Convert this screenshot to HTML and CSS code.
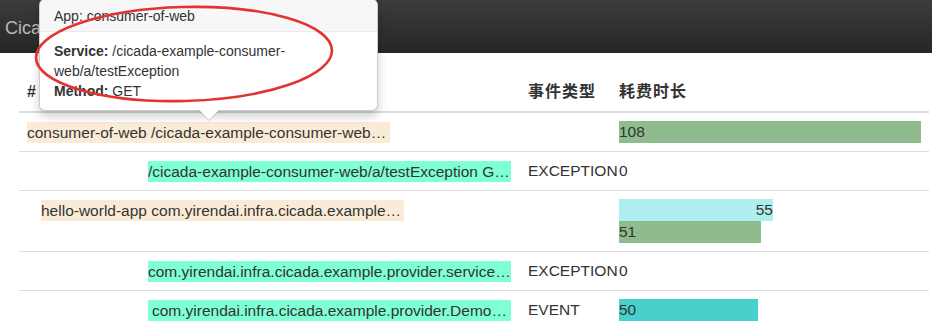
FILE: index.html
```html
<!DOCTYPE html>
<html lang="zh">
<head>
<meta charset="utf-8">
<title>Cicada</title>
<link rel="stylesheet" href="styles.css">
</head>
<body>
<nav class="navbar">
  <span class="brand">Cicada</span>
</nav>

<main class="content">
  <table class="trace-table">
    <colgroup>
      <col class="col-name">
      <col class="col-type">
      <col class="col-time">
    </colgroup>
    <thead>
      <tr>
        <th>#</th>
        <th>事件类型</th>
        <th>耗费时长</th>
      </tr>
    </thead>
    <tbody>
      <tr>
        <td><span class="name app lvl-0">consumer-of-web /cicada-example-consumer-web…</span></td>
        <td></td>
        <td><div class="bar seagreen" style="width:302px">108</div></td>
      </tr>
      <tr>
        <td><span class="name svc lvl-2">/cicada-example-consumer-web/a/testException G…</span></td>
        <td>EXCEPTION</td>
        <td><div class="bar zero" style="width:0">0</div></td>
      </tr>
      <tr>
        <td><span class="name app lvl-1">hello-world-app com.yirendai.infra.cicada.example…</span></td>
        <td></td>
        <td>
          <div class="bar turquoise right" style="width:154px">55</div>
          <div class="bar seagreen" style="width:142px">51</div>
        </td>
      </tr>
      <tr>
        <td><span class="name svc lvl-2">com.yirendai.infra.cicada.example.provider.service…</span></td>
        <td>EXCEPTION</td>
        <td><div class="bar zero" style="width:0">0</div></td>
      </tr>
      <tr>
        <td><span class="name svc lvl-2 pad">com.yirendai.infra.cicada.example.provider.Demo…</span></td>
        <td>EVENT</td>
        <td><div class="bar medturquoise" style="width:139px">50</div></td>
      </tr>
    </tbody>
  </table>
</main>

<div class="popover">
  <div class="popover-title">App: consumer-of-web</div>
  <div class="popover-body">
    <div><b>Service:</b> /cicada-example-consumer-web/a/testException</div>
    <div><b>Method:</b> GET</div>
  </div>
</div>

<svg class="annotation" width="932" height="329" viewBox="0 0 932 329">
  <ellipse cx="184" cy="54" rx="148" ry="47" fill="none" stroke="#e2332f" stroke-width="2.6" transform="rotate(-1.5 184 54)"/>
</svg>
</body>
</html>
```

FILE: styles.css
```css
html, body {
  margin: 0;
  padding: 0;
  background: #fff;
}

body {
  font-family: "Liberation Sans", Arial, "Noto Sans CJK SC", sans-serif;
  font-size: 14px;
  line-height: 20px;
  color: #333;
  width: 932px;
  height: 329px;
  overflow: hidden;
  position: relative;
}

.navbar {
  height: 53px;
  background: linear-gradient(#3c3c3c, #262626);
  display: flex;
  align-items: center;
  padding-left: 5px;
}

.brand {
  font-size: 18px;
  color: #b8b8b8;
  line-height: 20px;
  margin-top: 2px;
}

.content {
  padding: 20px 3px 0 19px;
}

.trace-table {
  border-collapse: collapse;
  table-layout: fixed;
  width: 910px;
  font-size: 15.5px;
}

.col-name { width: 501px; }
.col-type { width: 91px; }
.col-time { width: 318px; }

.trace-table th {
  text-align: left;
  font-family: "Liberation Sans", Arial, "Noto Sans CJK SC", sans-serif;
  font-weight: bold;
  font-size: 16px;
  letter-spacing: 1px;
  line-height: 22px;
  padding: 8px;
  border-bottom: 2px solid #ddd;
}

.trace-table td {
  padding: 8px;
  border-top: 1px solid #ddd;
  vertical-align: top;
  line-height: 22px;
  white-space: nowrap;
}

.name {
  display: block;
  width: 363px;
  height: 21px;
  line-height: 21px;
  margin-top: 1px;
  overflow: hidden;
  white-space: nowrap;
}

.name.pad { padding-left: 4px; width: 359px; }

.app { background: #faebd7; }
.svc { background: #7fffd4; }

.lvl-0 { margin-left: 0; }
.lvl-1 { margin-left: 14px; }
.lvl-2 { margin-left: 121px; }

.bar {
  height: 22px;
  line-height: 22px;
  white-space: nowrap;
  color: #333;
}

.bar.right { text-align: right; }
.bar.zero { overflow: visible; }

.seagreen { background: #8fbc8f; }
.turquoise { background: #afeeee; }
.medturquoise { background: #48d1cc; }

.popover {
  position: absolute;
  left: 39px;
  top: -1px;
  width: 337px;
  background: #fff;
  border: 1px solid rgba(0, 0, 0, 0.2);
  border-radius: 6px;
  box-shadow: 0 5px 10px rgba(0, 0, 0, 0.2);
  z-index: 5;
}

.popover::before {
  content: "";
  position: absolute;
  left: 158px;
  bottom: -11px;
  border-width: 11px 11px 0;
  border-style: solid;
  border-color: rgba(0, 0, 0, 0.18) transparent transparent;
}

.popover::after {
  content: "";
  position: absolute;
  left: 159px;
  bottom: -10px;
  border-width: 10px 10px 0;
  border-style: solid;
  border-color: #fff transparent transparent;
}

.popover-title {
  background: #f7f7f7;
  border-bottom: 1px solid #ebebeb;
  border-radius: 5px 5px 0 0;
  padding: 8px 14px 7px;
  line-height: 16px;
}

.popover-body {
  padding: 9px 14px 9px;
  line-height: 20px;
}

.annotation {
  position: absolute;
  left: 0;
  top: 0;
  z-index: 10;
  pointer-events: none;
}
```
